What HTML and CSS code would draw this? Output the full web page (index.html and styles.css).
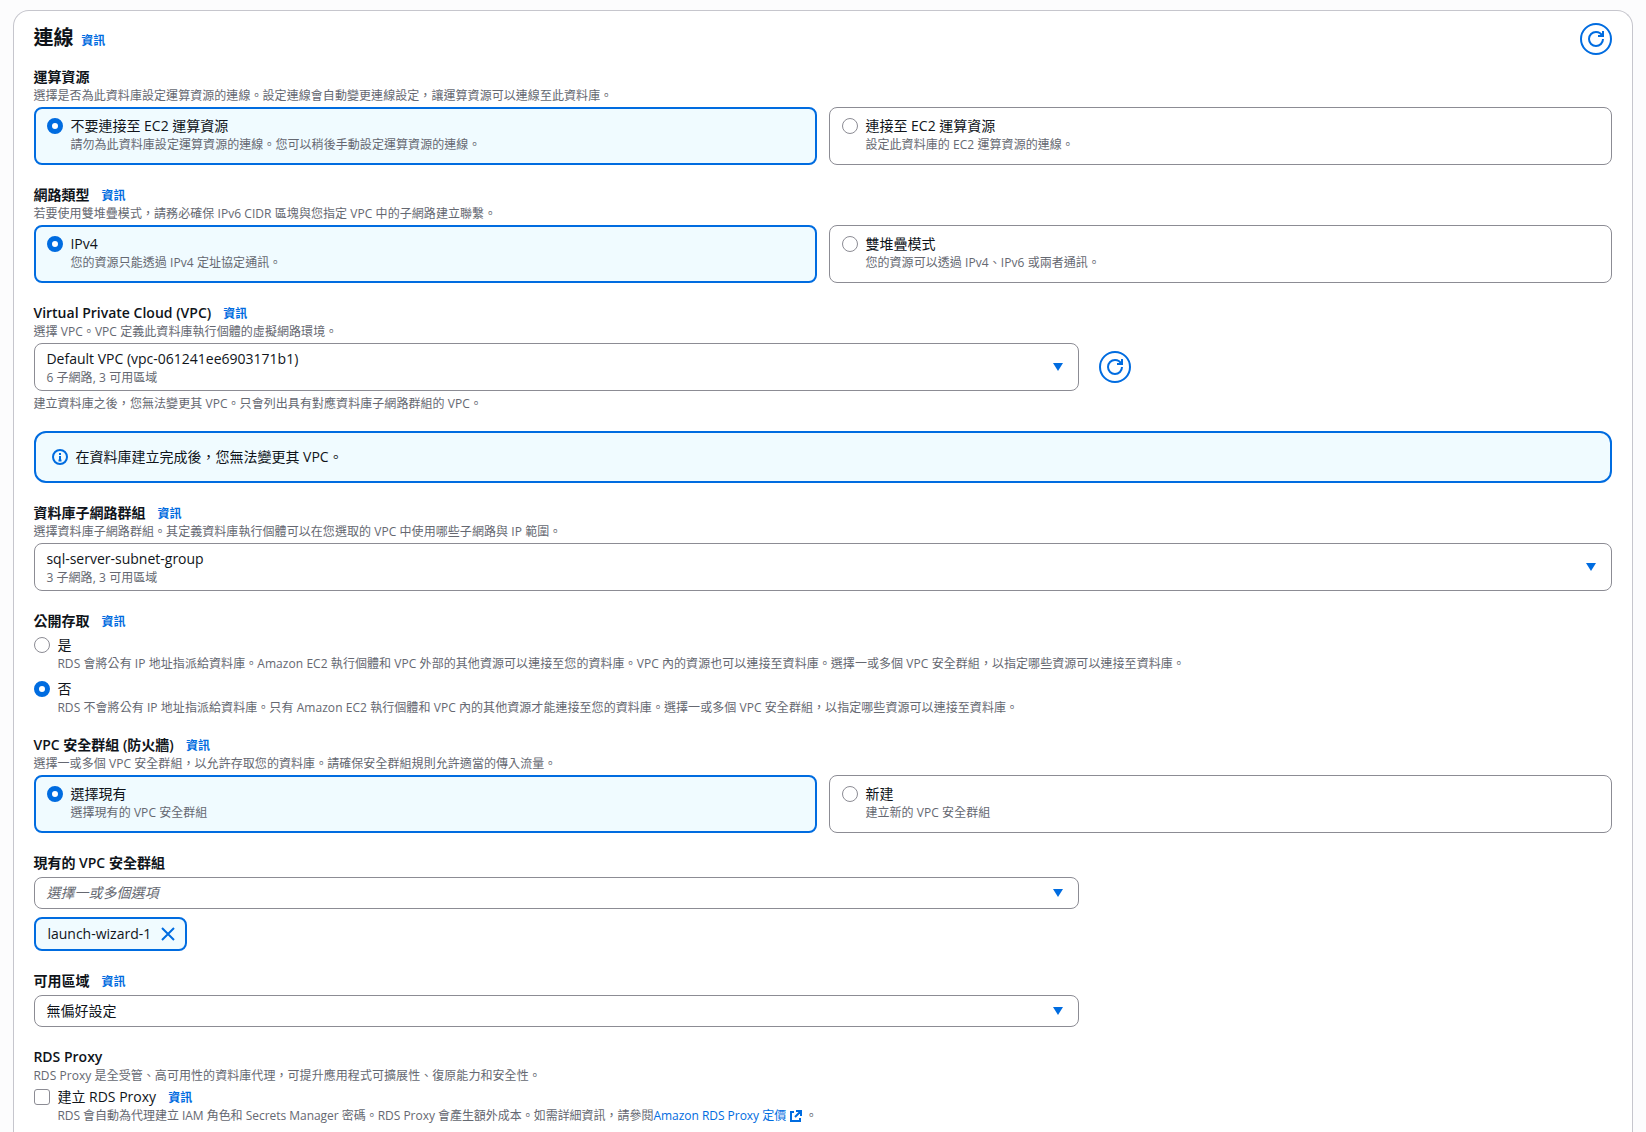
FILE: index.html
```html
<!DOCTYPE html>
<html lang="zh-Hant">
<head>
<meta charset="UTF-8">
<meta name="viewport" content="width=device-width, initial-scale=1.0">
<title>連線</title>
<link rel="stylesheet" href="styles.css">
</head>
<body>
  <svg class="sprite" aria-hidden="true">
    <symbol id="icon-refresh" viewBox="0 0 16 16">
      <path d="M15 8c0 3.87-3.13 7-7 7s-7-3.13-7-7 3.13-7 7-7c2.8 0 5.2 1.6 6.3 4" />
      <path d="M10 5h5V0" />
    </symbol>
    <symbol id="icon-info" viewBox="0 0 16 16">
      <circle cx="8" cy="8" r="7" />
      <path d="M8 11V8H7M6.5 11.5h3M8 4v2" />
    </symbol>
    <symbol id="icon-close" viewBox="0 0 16 16">
      <path d="m2 2 12 12M14 2 2 14" />
    </symbol>
    <symbol id="icon-external" viewBox="0 0 12 12">
      <path d="M6 1h5v5M11 1 5 7M4 2H1v9h9V8" />
    </symbol>
  </svg>

  <main class="container">
    <header class="container-header">
      <h2 class="title">連線</h2>
      <a href="#" class="info-link title-info">資訊</a>
      <button class="icon-button" aria-label="重新整理"><svg class="icon"><use href="#icon-refresh" /></svg></button>
    </header>

    <section class="field">
      <div class="label">運算資源</div>
      <p class="description">選擇是否為此資料庫設定運算資源的連線。設定連線會自動變更連線設定，讓運算資源可以連線至此資料庫。</p>
      <div class="tiles">
        <label class="tile selected">
          <span class="radio checked"></span>
          <span class="option">
            <span class="option-label">不要連接至 EC2 運算資源</span>
            <span class="description">請勿為此資料庫設定運算資源的連線。您可以稍後手動設定運算資源的連線。</span>
          </span>
        </label>
        <label class="tile">
          <span class="radio"></span>
          <span class="option">
            <span class="option-label">連接至 EC2 運算資源</span>
            <span class="description">設定此資料庫的 EC2 運算資源的連線。</span>
          </span>
        </label>
      </div>
    </section>

    <section class="field">
      <div class="label">網路類型 <a href="#" class="info-link">資訊</a></div>
      <p class="description">若要使用雙堆疊模式，請務必確保 IPv6 CIDR 區塊與您指定 VPC 中的子網路建立聯繫。</p>
      <div class="tiles">
        <label class="tile selected">
          <span class="radio checked"></span>
          <span class="option">
            <span class="option-label">IPv4</span>
            <span class="description">您的資源只能透過 IPv4 定址協定通訊。</span>
          </span>
        </label>
        <label class="tile">
          <span class="radio"></span>
          <span class="option">
            <span class="option-label">雙堆疊模式</span>
            <span class="description">您的資源可以透過 IPv4、IPv6 或兩者通訊。</span>
          </span>
        </label>
      </div>
    </section>

    <section class="field">
      <div class="label">Virtual Private Cloud (VPC) <a href="#" class="info-link">資訊</a></div>
      <p class="description">選擇 VPC。VPC 定義此資料庫執行個體的虛擬網路環境。</p>
      <div class="control-row">
        <div class="select narrow">
          <span class="option">
            <span class="option-label">Default VPC (vpc-061241ee6903171b1)</span>
            <span class="description">6 子網路, 3 可用區域</span>
          </span>
          <span class="caret"></span>
        </div>
        <button class="icon-button" aria-label="重新整理"><svg class="icon"><use href="#icon-refresh" /></svg></button>
      </div>
      <p class="description constraint">建立資料庫之後，您無法變更其 VPC。只會列出具有對應資料庫子網路群組的 VPC。</p>
    </section>

    <div class="alert">
      <svg class="icon"><use href="#icon-info" /></svg>
      <span>在資料庫建立完成後，您無法變更其 VPC。</span>
    </div>

    <section class="field">
      <div class="label">資料庫子網路群組 <a href="#" class="info-link">資訊</a></div>
      <p class="description">選擇資料庫子網路群組。其定義資料庫執行個體可以在您選取的 VPC 中使用哪些子網路與 IP 範圍。</p>
      <div class="select">
        <span class="option">
          <span class="option-label">sql-server-subnet-group</span>
          <span class="description">3 子網路, 3 可用區域</span>
        </span>
        <span class="caret"></span>
      </div>
    </section>

    <section class="field">
      <div class="label">公開存取 <a href="#" class="info-link">資訊</a></div>
      <div class="radio-group">
        <label class="choice">
          <span class="radio"></span>
          <span class="option">
            <span class="option-label">是</span>
            <span class="description">RDS 會將公有 IP 地址指派給資料庫。Amazon EC2 執行個體和 VPC 外部的其他資源可以連接至您的資料庫。VPC 內的資源也可以連接至資料庫。選擇一或多個 VPC 安全群組，以指定哪些資源可以連接至資料庫。</span>
          </span>
        </label>
        <label class="choice">
          <span class="radio checked"></span>
          <span class="option">
            <span class="option-label">否</span>
            <span class="description">RDS 不會將公有 IP 地址指派給資料庫。只有 Amazon EC2 執行個體和 VPC 內的其他資源才能連接至您的資料庫。選擇一或多個 VPC 安全群組，以指定哪些資源可以連接至資料庫。</span>
          </span>
        </label>
      </div>
    </section>

    <section class="field">
      <div class="label">VPC 安全群組 (防火牆) <a href="#" class="info-link">資訊</a></div>
      <p class="description">選擇一或多個 VPC 安全群組，以允許存取您的資料庫。請確保安全群組規則允許適當的傳入流量。</p>
      <div class="tiles">
        <label class="tile selected">
          <span class="radio checked"></span>
          <span class="option">
            <span class="option-label">選擇現有</span>
            <span class="description">選擇現有的 VPC 安全群組</span>
          </span>
        </label>
        <label class="tile">
          <span class="radio"></span>
          <span class="option">
            <span class="option-label">新建</span>
            <span class="description">建立新的 VPC 安全群組</span>
          </span>
        </label>
      </div>
    </section>

    <section class="field">
      <div class="label">現有的 VPC 安全群組</div>
      <div class="select narrow">
        <span class="placeholder">選擇一或多個選項</span>
        <span class="caret"></span>
      </div>
      <div class="token">
        <span>launch-wizard-1</span>
        <svg class="icon"><use href="#icon-close" /></svg>
      </div>
    </section>

    <section class="field">
      <div class="label">可用區域 <a href="#" class="info-link">資訊</a></div>
      <div class="select narrow">
        <span>無偏好設定</span>
        <span class="caret"></span>
      </div>
    </section>

    <section class="field">
      <div class="label">RDS Proxy</div>
      <p class="description">RDS Proxy 是全受管、高可用性的資料庫代理，可提升應用程式可擴展性、復原能力和安全性。</p>
      <div class="choice proxy">
        <span class="checkbox"></span>
        <span class="option">
          <span class="option-label">建立 RDS Proxy <a href="#" class="info-link">資訊</a></span>
          <span class="description">RDS 會自動為代理建立 IAM 角色和 Secrets Manager 密碼。RDS Proxy 會產生額外成本。如需詳細資訊，請參閱<a href="#" class="external-link">Amazon RDS Proxy 定價 <svg class="icon icon-small"><use href="#icon-external" /></svg></a> 。</span>
        </span>
      </div>
    </section>
  </main>
</body>
</html>
```
FILE: styles.css
```css
* {
  margin: 0;
  padding: 0;
  box-sizing: border-box;
}

body {
  height: 1132px;
  padding: 10px 13px 0;
  font-family: 'Open Sans', 'Noto Sans CJK TC', sans-serif;
  font-size: 14px;
  line-height: 20px;
  text-indent: -0.6px;
  color: #0f141a;
  background-color: #fcfcfd;
}

a {
  color: #006ce0;
  text-decoration: none;
}

.sprite {
  display: none;
}

.container {
  display: flex;
  flex-direction: column;
  gap: 20px;
  height: 1122px;
  padding: 12px 20px 0;
  background-color: #fff;
  border: 1px solid #c6c6cd;
  border-bottom: none;
  border-radius: 16px 16px 0 0;
}

.container-header {
  display: flex;
  align-items: flex-start;
  height: 32px;
  margin-bottom: -8px;
}

.title {
  padding-top: 1px;
  font-size: 20px;
  line-height: 28px;
}

.info-link {
  margin-left: 8.5px;
  font-size: 12px;
  line-height: 16px;
  font-weight: 700;
}

.title-info {
  padding-top: 10px;
}

/* Icons */
.icon {
  display: block;
  flex: none;
  width: 16px;
  height: 16px;
  fill: none;
  stroke: #006ce0;
  stroke-width: 2;
}

.icon-button {
  display: flex;
  align-items: center;
  justify-content: center;
  width: 32px;
  height: 32px;
  color: #006ce0;
  background: #fff;
  border: 2px solid #006ce0;
  border-radius: 50%;
}

.container-header .icon-button {
  margin-left: auto;
}

/* Form fields */
.label {
  font-weight: 600;
}

.description {
  padding-top: 1px;
  margin-bottom: -1px;
  font-size: 12px;
  line-height: 16px;
  letter-spacing: 0.005em;
  color: #656871;
}

.tiles {
  display: grid;
  grid-template-columns: 1fr 1fr;
  gap: 12px;
  margin-top: 4px;
}

.tile {
  display: flex;
  gap: 8px;
  height: 58px;
  padding: 8px 12px;
  border: 1px solid #8c8c94;
  border-radius: 8px;
}

.tile.selected {
  padding: 7px 11px;
  background-color: #f0fbff;
  border: 2px solid #006ce0;
}

.option {
  display: flex;
  flex-direction: column;
}

.radio,
.checkbox {
  flex: none;
  width: 16px;
  height: 16px;
  margin-top: 2px;
  background-color: #fff;
  border: 1px solid #8c8c94;
  border-radius: 50%;
}

.radio.checked {
  border: 5px solid #006ce0;
}

.checkbox {
  border-radius: 3px;
}

.radio-group {
  display: flex;
  flex-direction: column;
  gap: 8px;
  margin-top: 4px;
}

.choice {
  display: flex;
  gap: 8px;
}

.choice.proxy {
  margin-top: 4px;
}

.choice.proxy .description {
  letter-spacing: -0.03px;
}

.control-row {
  display: flex;
  align-items: center;
  gap: 20px;
  margin-top: 4px;
}

.select {
  display: flex;
  align-items: center;
  justify-content: space-between;
  margin-top: 4px;
  padding: 5px 15px 5px 12px;
  border: 1px solid #8c8c94;
  border-radius: 8px;
}

.control-row .select {
  margin-top: 0;
}

.select.narrow {
  width: 1045px;
}

.caret {
  width: 10px;
  height: 8px;
  background-color: #006ce0;
  clip-path: polygon(0 0, 100% 0, 50% 100%);
}

.placeholder {
  font-style: italic;
  color: #656871;
}

.constraint {
  margin-top: 4px;
}

.alert {
  display: flex;
  align-items: center;
  gap: 8px;
  height: 52px;
  padding: 0 16px;
  background-color: #f0fbff;
  border: 2px solid #006ce0;
  border-radius: 12px;
}

.token {
  display: flex;
  align-items: center;
  gap: 9px;
  width: fit-content;
  height: 34px;
  margin-top: 8px;
  padding: 0 9px 0 12px;
  background-color: #f0fbff;
  border: 2px solid #006ce0;
  border-radius: 8px;
}

.icon-small {
  display: inline-block;
  width: 12px;
  height: 12px;
  margin-left: 1px;
  vertical-align: -2px;
}
```
